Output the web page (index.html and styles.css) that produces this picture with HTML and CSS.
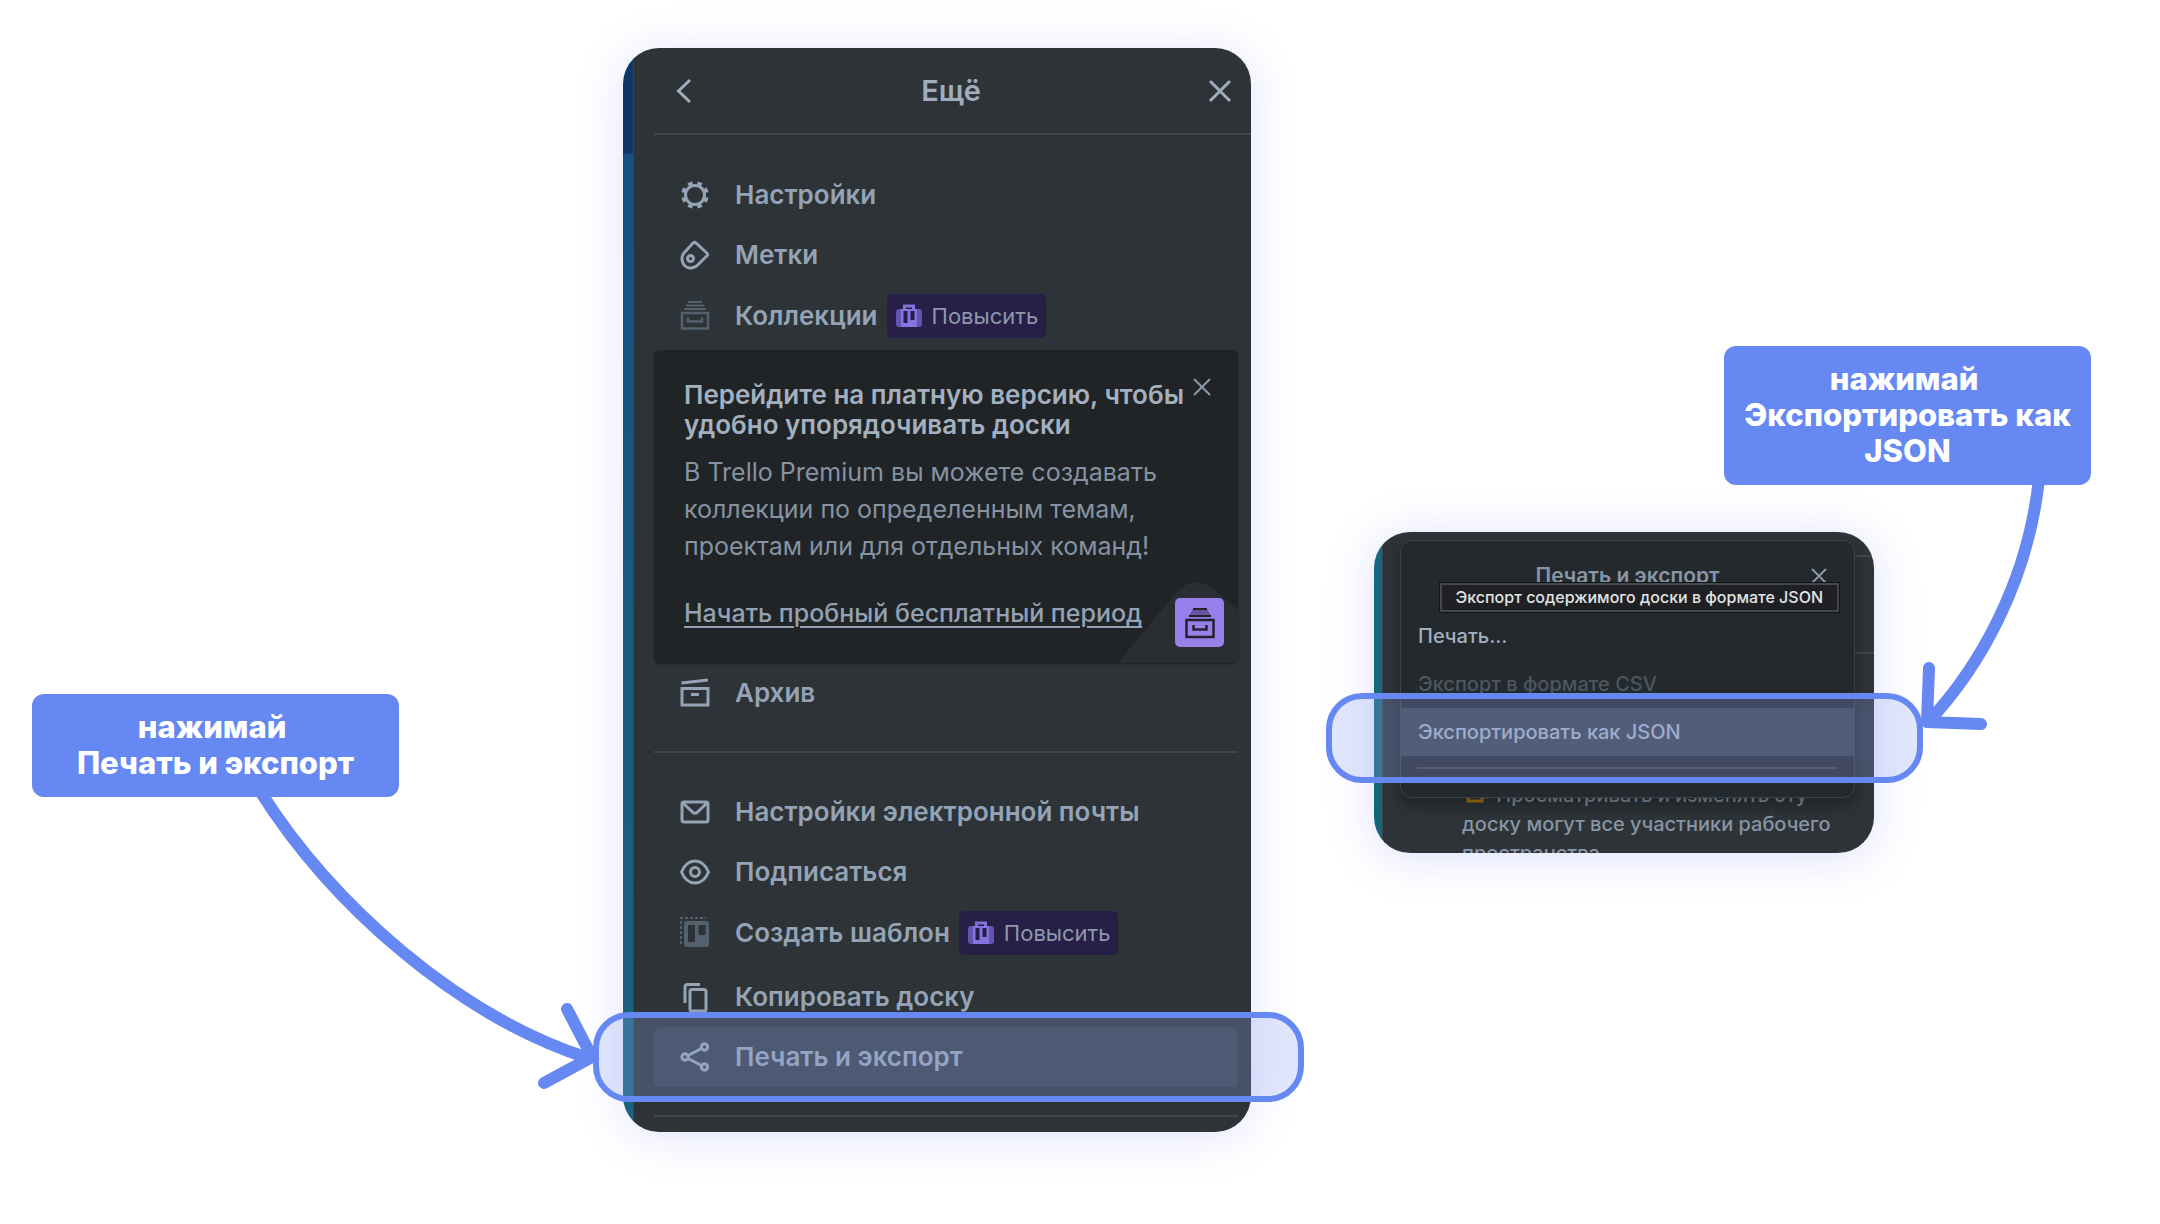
FILE: index.html
```html
<!DOCTYPE html>
<html lang="ru">
<head>
    <meta charset="UTF-8">
    <meta name="viewport" content="width=device-width, initial-scale=1.0">
    <title>Экспорт доски Trello в JSON</title>
    <link rel="stylesheet" href="styles.css">
</head>
<body>
<main class="guide">
    <div class="step-note">
        <div class="callout">
            нажимай&nbsp;<br>Печать и экспорт
            <svg class="arrow arrow-right" width="360" height="300" viewBox="0 0 360 300" aria-hidden="true">
                <path d="M13 -6C85 108 211 219 341 261M320 212L345 260L297 286"/>
            </svg>
        </div>
    </div>

    <div class="step-menu">
        <section class="panel">
            <header class="panel-header">
                <button class="icon-button" aria-label="Назад">
                    <svg width="20" height="26" viewBox="0 0 20 26"><path d="M16 2L4.500 13L16 24"/></svg>
                </button>
                <h2>Ещё</h2>
                <button class="icon-button" aria-label="Закрыть">
                    <svg width="24" height="24" viewBox="0 0 24 24"><path d="M2 2L22 22M22 2L2 22"/></svg>
                </button>
            </header>

            <nav class="panel-body">
                <button class="menu-item">
                    <svg class="icon" viewBox="0 0 30 30">
                        <circle cx="15" cy="15" r="9.500"/>
                        <circle cx="15" cy="15" r="11.800" pathLength="16" stroke-width="4" stroke-dasharray="1 1" transform="rotate(11.25 15 15)"/>
                    </svg>
                    Настройки
                </button>
                <button class="menu-item">
                    <svg class="icon" viewBox="0 0 30 30">
                        <path d="M12.800 3.200Q14.500 1.500 16.200 3.200L26.800 13Q28.300 14.500 26.800 16L16.500 26Q10 30.500 4.500 25.500Q0 20 3.500 13.500Z"/>
                        <circle cx="10.500" cy="18.500" r="3"/>
                    </svg>
                    Метки
                </button>
                <button class="menu-item menu-item-paid">
                    <svg class="icon icon-muted" viewBox="0 0 30 30">
                        <path d="M8 1H22M6 4.500H24M4 8H26" stroke-width="2"/>
                        <path d="M2 12H28V27.500H2ZM8 16.500V20.500H22V16.500" stroke-width="2.500"/>
                    </svg>
                    Коллекции
                    <span class="badge">
                        <svg width="26" height="24" viewBox="0 0 26 24">
                            <path class="bag-handle" d="M8.500 6V2H17.500V6"/>
                            <rect class="bag-side" x="0" y="5" width="26" height="18" rx="3"/>
                            <path class="bag-body" d="M5 5H21V23H5Z"/>
                            <path class="bag-slot" d="M7.500 7H11.500V19H7.500ZM14.500 7H18.500V16H14.500Z"/>
                        </svg>
                        Повысить
                    </span>
                </button>

                <div class="promo">
                    <h3>Перейдите на платную версию, чтобы удобно упорядочивать доски</h3>
                    <p>В Trello Premium вы можете создавать коллекции по определенным темам, проектам или для отдельных команд!</p>
                    <a href="#">Начать пробный бесплатный период</a>
                    <button class="icon-button promo-close" aria-label="Закрыть">
                        <svg width="18" height="18" viewBox="0 0 18 18"><path d="M1 1L17 17M17 1L1 17"/></svg>
                    </button>
                    <svg class="promo-corner" width="120" height="81" viewBox="0 0 120 81" aria-hidden="true">
                        <path d="M0 81L56 13Q76 -10 96 8L120 28V81Z"/>
                    </svg>
                    <div class="promo-logo">
                        <svg class="icon" viewBox="0 0 30 30">
                            <path class="shade" d="M8 1H22L26 8H4Z"/>
                            <path d="M8 1H22M4 8H26" stroke-width="2"/>
                            <path d="M1.500 12H28.500V29H1.500ZM8.500 17V21.500H21.500V17" stroke-width="2.500"/>
                        </svg>
                    </div>
                </div>

                <button class="menu-item">
                    <svg class="icon" viewBox="0 0 30 30">
                        <path d="M1.500 5L28 2M2 10.500H28V27H2ZM11 16.500H19"/>
                    </svg>
                    Архив
                </button>
                <hr>
                <button class="menu-item">
                    <svg class="icon" viewBox="0 0 30 30">
                        <path d="M4 5H26Q28 5 28 7V23Q28 25 26 25H4Q2 25 2 23V7Q2 5 4 5ZM3 6L13 15.500Q15 17 17 15.500L27 6"/>
                    </svg>
                    Настройки электронной почты
                </button>
                <button class="menu-item">
                    <svg class="icon" viewBox="0 0 30 30">
                        <path d="M1.500 15Q6 4 15 4T28.500 15Q24 26 15 26T1.500 15Z"/>
                        <circle cx="15" cy="15" r="4.500"/>
                    </svg>
                    Подписаться
                </button>
                <button class="menu-item menu-item-paid">
                    <svg class="icon icon-muted" viewBox="0 0 30 30">
                        <path d="M1 26V0H26" stroke-width="2" stroke-dasharray="3 2"/>
                        <path class="solid" fill-rule="evenodd" d="M7 3H26Q29 3 29 6V26Q29 29 26 29H7Q4 29 4 26V6Q4 3 7 3ZM8 7V24H15V7ZM18.500 7V17H25.500V7Z"/>
                    </svg>
                    Создать шаблон
                    <span class="badge">
                        <svg width="26" height="24" viewBox="0 0 26 24">
                            <path class="bag-handle" d="M8.500 6V2H17.500V6"/>
                            <rect class="bag-side" x="0" y="5" width="26" height="18" rx="3"/>
                            <path class="bag-body" d="M5 5H21V23H5Z"/>
                            <path class="bag-slot" d="M7.500 7H11.500V19H7.500ZM14.500 7H18.500V16H14.500Z"/>
                        </svg>
                        Повысить
                    </span>
                </button>
                <button class="menu-item">
                    <svg class="icon" viewBox="0 0 30 30">
                        <path d="M20 2.500H7.500Q5 2.500 5 5V21M12 7.500H24Q26 7.500 26 9.500V27Q26 29 24 29H12Q10 29 10 27V9.500Q10 7.500 12 7.500Z"/>
                    </svg>
                    Копировать доску
                </button>
                <button class="menu-item menu-item-active">
                    <svg class="icon" viewBox="0 0 30 30">
                        <circle cx="5" cy="15" r="3.200"/>
                        <circle cx="24.500" cy="5" r="3.200"/>
                        <circle cx="24.500" cy="25" r="3.200"/>
                        <path d="M8 13.500L21.500 6.500M8 16.500L21.500 23.500"/>
                    </svg>
                    Печать и экспорт
                    <span class="ring ring-menu"></span>
                </button>
                <hr class="last-line">
            </nav>
        </section>
    </div>

    <div class="step-export">
        <div class="callout">
            нажимай&nbsp;<br>Экспортировать как<br>JSON
            <svg class="arrow arrow-left" width="140" height="260" viewBox="0 0 140 260" aria-hidden="true">
                <path d="M120 -6C109 96 61 182 9 237M10 183L8 237L62 239"/>
            </svg>
        </div>

        <div class="board">
            <section class="board-view">
                <div class="popover">
                    <header class="popover-header">
                        <h2>Печать и экспорт</h2>
                        <button class="icon-button popover-close" aria-label="Закрыть">
                            <svg width="16" height="16" viewBox="0 0 16 16"><path d="M1 1L15 15M15 1L1 15"/></svg>
                        </button>
                        <div class="tooltip" role="tooltip">Экспорт содержимого доски в формате JSON</div>
                    </header>
                    <button class="popover-item">Печать...</button>
                    <button class="popover-item" disabled>Экспорт в формате CSV</button>
                    <button class="popover-item popover-item-active">Экспортировать как JSON</button>
                    <hr>
                </div>
                <p class="board-text">
                    <svg width="24" height="20" viewBox="0 0 24 20"><path d="M2 8V18H16V14H20V8"/></svg>
                    Просматривать и изменять эту доску могут все участники рабочего пространства.
                </p>
            </section>
            <span class="ring ring-board"></span>
        </div>
    </div>
</main>
</body>
</html>
```

FILE: styles.css
```css
* {
    margin: 0;
    padding: 0;
    box-sizing: border-box;
}

body {
    min-height: 100vh;
    background-color: #fff;
    color: #9fadbc;
    font-family: "Inter", "Liberation Sans", sans-serif;
    overflow-x: hidden;
}

button {
    background: none;
    border: none;
    color: inherit;
    font: inherit;
    text-align: left;
    cursor: pointer;
}

svg {
    display: block;
    flex: none;
    overflow: visible;
    fill: none;
    stroke: currentColor;
}

hr {
    border: none;
    height: 2px;
    background-color: #3c4750;
}

.guide {
    display: grid;
    grid-template-columns: 623fr 751fr 786fr;
    align-items: start;
}

.step-note {
    padding: 694px 0 0 32px;
}

.step-menu {
    padding-top: 48px;
}

.step-export {
    display: flex;
    flex-direction: column;
    gap: 47px;
    padding: 346px 69px 0 0;
}

/* callouts */
.callout {
    position: relative;
    z-index: 2;
    width: 367px;
    padding: 15px 0 16px;
    border-radius: 12px;
    background-color: #6688f3;
    color: #fff;
    font-size: 31px;
    font-weight: 800;
    line-height: 36px;
    text-align: center;
}

.step-export .callout {
    align-self: flex-end;
}

.arrow {
    position: absolute;
    top: 100%;
    stroke: #6688f3;
    stroke-width: 12;
    stroke-linecap: round;
    stroke-linejoin: round;
    pointer-events: none;
}

.arrow-right {
    left: 215px;
}

.arrow-left {
    left: 195px;
}

.ring {
    position: absolute;
    z-index: 1;
    border: 6px solid #6688f3;
    border-radius: 36px;
    background-color: rgba(143, 167, 240, 0.27);
    pointer-events: none;
}

.ring-menu {
    inset: -15px -66px -15px -61px;
}

.ring-board {
    top: 161px;
    left: -48px;
    right: -49px;
    height: 90px;
}

/* board menu */
.panel {
    max-width: 628px;
    padding: 0 0 15px 31px;
    border-radius: 36px;
    background:
        linear-gradient(#0d3765, #0d3765) left top / 10px 106px no-repeat,
        linear-gradient(#124d85, #185b80 50%, #1a627c) left top / 10px 100% no-repeat,
        linear-gradient(#3b444d, #3b444d) left top / 11px 100% no-repeat,
        #2d3337;
    box-shadow: 0 4px 48px rgba(100, 115, 240, 0.2);
}

.panel-header {
    display: flex;
    align-items: center;
    justify-content: space-between;
    height: 87px;
    padding: 0 19px 0 20px;
    border-bottom: 2px solid #3c4750;
}

.panel-header h2 {
    font-size: 29px;
    font-weight: 600;
    line-height: 36px;
}

.icon-button {
    display: block;
    stroke-width: 2;
}

.panel-header .icon-button {
    stroke-width: 3;
}

.panel-body {
    padding: 30px 13px 0 0;
}

.panel-body hr {
    margin: 28px 0 29px;
}

.panel-body .last-line {
    margin-bottom: 0;
}

.menu-item {
    position: relative;
    display: flex;
    align-items: center;
    width: 100%;
    min-height: 60px;
    padding-left: 26px;
    gap: 25px;
    border-radius: 6px;
    color: #94a3b5;
    font-size: 26px;
    font-weight: 600;
    line-height: 30px;
}

.menu-item-paid {
    min-height: 65px;
    padding-bottom: 4px;
}

.menu-item-active {
    background-color: #363e47;
}

.icon {
    width: 30px;
    height: 30px;
    stroke-width: 3;
}

.icon-muted {
    color: #53616e;
}

.icon .solid {
    fill: currentColor;
    stroke: none;
}

.icon .shade {
    fill: #6353a0;
    stroke: none;
}

.badge {
    display: flex;
    align-items: center;
    gap: 10px;
    height: 44px;
    margin-left: -16px;
    padding: 0 8px 0 9px;
    border-radius: 5px;
    background-color: #271f47;
    color: #8e99ab;
    font-size: 22px;
    font-weight: 400;
}

.bag-handle {
    stroke: #8270db;
    stroke-width: 3;
}

.bag-side {
    fill: #6553b0;
    stroke: none;
}

.bag-body {
    fill: #8673e2;
    stroke: none;
}

.bag-slot {
    fill: #271f47;
    stroke: none;
}

/* premium block */
.promo {
    position: relative;
    padding: 30px 50px 31px 30px;
    border-radius: 6px;
    background-color: #202427;
    box-shadow: 0 1px 2px rgba(0, 0, 0, 0.4);
    font-size: 25px;
    line-height: 37px;
}

.promo h3 {
    margin-right: -4px;
    color: #a3b0bf;
    font-size: 26px;
    font-weight: 600;
    line-height: 30px;
}

.promo p {
    margin: 14px 0 30px;
    color: #8593a3;
}

.promo a {
    display: block;
    width: fit-content;
    color: #93a1b2;
    font-weight: 500;
    text-decoration-thickness: 2px;
    text-underline-offset: 4px;
}

.promo-close {
    position: absolute;
    top: 28px;
    right: 27px;
    color: #8a98a8;
}

.promo-corner {
    position: absolute;
    right: 0;
    bottom: 0;
    fill: #2a2e32;
    stroke: none;
}

.promo-logo {
    position: absolute;
    right: 14px;
    bottom: 16px;
    display: flex;
    align-items: center;
    justify-content: center;
    width: 49px;
    height: 49px;
    border-radius: 5px;
    background-color: #9780ea;
    color: #23222f;
}

/* export popover */
.board {
    position: relative;
    max-width: 500px;
}

.board-view {
    max-height: 321px;
    padding: 8px 19px 0 26px;
    border-radius: 36px;
    background:
        linear-gradient(#3c4750, #3c4750) right 23px / 20px 2px no-repeat,
        linear-gradient(#3c4750, #3c4750) right 120px / 20px 2px no-repeat,
        linear-gradient(#30363f, #30363f) right 4px top 179px / 14px 48px no-repeat,
        linear-gradient(#1a6680, #17647a) left top / 8px 100% no-repeat,
        linear-gradient(#3b424f, #3b424f) left top / 9px 100% no-repeat,
        #2d3337;
    box-shadow: 0 4px 48px rgba(100, 115, 240, 0.22);
    overflow: hidden;
}

.popover {
    position: relative;
    padding-bottom: 28px;
    border: 1px solid #39424b;
    border-radius: 12px;
    background-color: #24292d;
    box-shadow: 0 8px 14px rgba(10, 14, 18, 0.4);
}

.popover-header {
    position: relative;
    height: 71px;
    padding-top: 23px;
}

.popover-header h2 {
    color: #8795a6;
    font-size: 21px;
    font-weight: 600;
    line-height: 24px;
    text-align: center;
}

.popover-close {
    position: absolute;
    top: 27px;
    right: 27px;
    color: #8795a6;
}

.tooltip {
    position: absolute;
    top: 42px;
    right: 15px;
    padding: 3px 14px;
    border: 2px solid #43464a;
    outline: 1px solid #111416;
    background-color: #1e2023;
    color: #e3e4e5;
    font-size: 16px;
    font-weight: 500;
    line-height: 19px;
    white-space: nowrap;
}

.popover-item {
    display: block;
    width: 100%;
    height: 48px;
    padding: 0 17px;
    color: #a3b0bf;
    font-size: 20px;
    font-weight: 500;
    line-height: 29px;
}

.popover-item:disabled {
    color: #4c5660;
    cursor: default;
}

.popover-item-active {
    background-color: #3a434e;
}

.popover hr {
    margin: 11px 16px 0;
}

.board-text {
    margin-top: -17px;
    padding: 0 2px 0 62px;
    color: #8795a6;
    font-size: 20px;
    font-weight: 500;
    line-height: 29px;
}

.board-text svg {
    display: inline-block;
    margin: 0 1px 0 4px;
    vertical-align: -1px;
    stroke: #b07a12;
    stroke-width: 3;
}
```
